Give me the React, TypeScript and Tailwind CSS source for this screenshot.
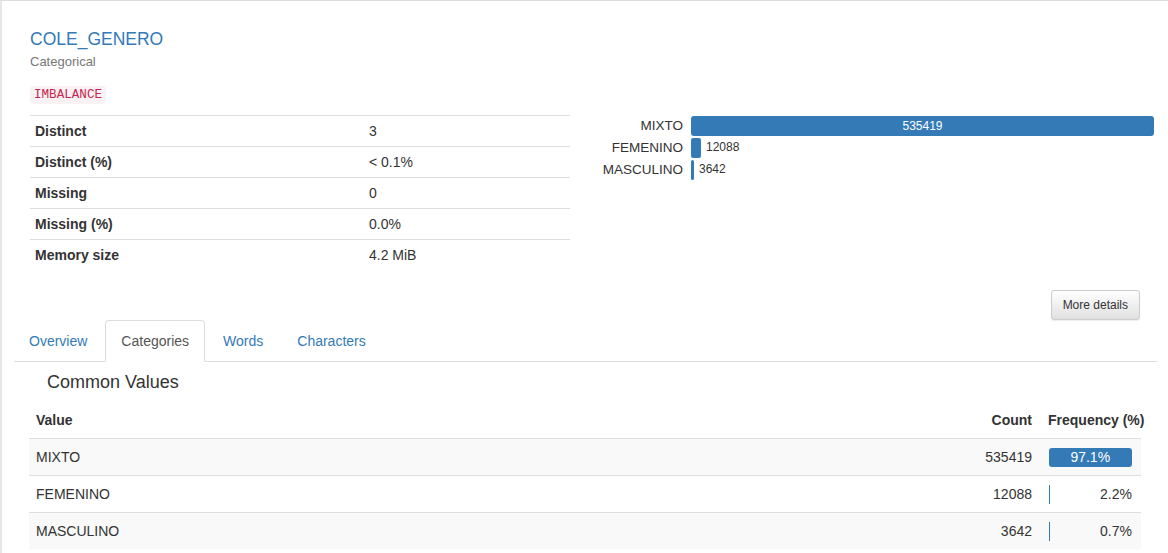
import React from "react";

const stats: [string, string][] = [
  ["Distinct", "3"],
  ["Distinct (%)", "< 0.1%"],
  ["Missing", "0"],
  ["Missing (%)", "0.0%"],
  ["Memory size", "4.2 MiB"],
];

const cats = [
  { name: "MIXTO", count: 535419, freq: 97.1 },
  { name: "FEMENINO", count: 12088, freq: 2.2 },
  { name: "MASCULINO", count: 3642, freq: 0.7 },
];

const MAX = 535419;

export default function App() {
  return (
    <div
      className="w-[1168px] h-[553px] overflow-hidden bg-white border-l-2 border-t border-l-[#e6e6ea] border-t-[#dcdcdc] text-[#333]"
      style={{ fontFamily: '"Liberation Sans", Arial, Helvetica, sans-serif' }}
    >
      {/* Top section */}
      <div className="flex pt-[28px] pl-[28px] pr-[12px]">
        <div className="w-[540px] shrink-0">
          <div className="text-[17.5px] leading-[20px] text-[#337ab7]">COLE_GENERO</div>
          <div className="mt-[4px] text-[13px] leading-[18px] text-[#777]">Categorical</div>
          <div className="mt-[15px] h-[18px] flex items-start">
            <span
              className="block h-[18px] px-[4px] rounded-[4px] bg-[#f9f2f4] text-[#c7254e] text-[12.6px] leading-[19px]"
              style={{ fontFamily: '"Liberation Mono", "DejaVu Sans Mono", monospace' }}
            >
              IMBALANCE
            </span>
          </div>
          <div className="mt-[11px] text-[14px]">
            {stats.map(([k, v]) => (
              <div key={k} className="flex border-t border-[#ddd] h-[31px] items-center pt-[1px]">
                <div className="w-[334px] px-[5px] font-bold">{k}</div>
                <div className="flex-1 px-[5px]">{v}</div>
              </div>
            ))}
          </div>
        </div>
        <div className="flex-1 pt-[86px]">
          {cats.map((c) => {
            const w = Math.max(2, Math.round((c.count / MAX) * 463));
            const full = c.count === MAX;
            return (
              <div key={c.name} className="flex items-center h-[22px]">
                <div className="w-[113px] text-right text-[13.5px] leading-[16px]">{c.name}</div>
                <div className="ml-[8px] flex items-center w-[463px]">
                  <div
                    className={
                      full
                        ? "h-[20px] rounded-[3px] bg-[#337ab7] text-white text-[12px] leading-[20px] text-center"
                        : "h-[20px] rounded-[2px] bg-[#337ab7]"
                    }
                    style={{ width: `${w}px` }}
                  >
                    {full ? c.count : null}
                  </div>
                  {!full && (
                    <span className="ml-[5px] text-[12px] leading-[14px] -mt-[3px]">{c.count}</span>
                  )}
                </div>
              </div>
            );
          })}
        </div>
      </div>

      {/* More details */}
      <div className="flex justify-end pr-[28px] mt-[20px]">
        <button className="h-[30px] px-[11px] text-[12px] leading-[18px] text-[#333] border border-[#ccc] rounded-[3px] bg-linear-to-b from-white to-[#e0e0e0] shadow-[0_1px_1px_rgba(0,0,0,0.075)]">
          More details
        </button>
      </div>

      {/* Tabs */}
      <div className="ml-[12px] mr-[11px] flex border-b border-[#ddd] h-[42px] text-[14px] leading-[20px]">
        {["Overview", "Categories", "Words", "Characters"].map((t, i) => {
          const active = t === "Categories";
          const base = i === 0 ? "-ml-px mr-[2px] h-[42px] px-[15px] py-[10px] border " : "mr-[2px] h-[42px] px-[15px] py-[10px] border ";
          return (
            <div
              key={t}
              className={
                active
                  ? base + "border-[#ddd] border-b-white rounded-t-[4px] bg-white text-[#555]"
                  : base + "border-transparent text-[#337ab7]"
              }
            >
              {t}
            </div>
          );
        })}
      </div>

      {/* Common values */}
      <div className="ml-[45px] mt-[10px] text-[18px] leading-[20px] font-medium">Common Values</div>
      <div className="ml-[27px] mr-[27px] mt-[10px] text-[14px] leading-[20px]">
        <div className="flex h-[36px] items-center font-bold">
          <div className="flex-1 pl-[7px]">Value</div>
          <div className="w-[100px] pr-[8px] text-right">Count</div>
          <div className="w-[101px] pl-[8px] whitespace-nowrap">Frequency (%)</div>
        </div>
        {cats.map((c, i) => (
          <div
            key={c.name}
            className={
              i % 2 === 0
                ? "flex h-[37px] items-center border-t border-[#ddd] bg-[#f9f9f9]"
                : "flex h-[37px] items-center border-t border-[#ddd] bg-white"
            }
          >
            <div className="flex-1 pl-[7px]">{c.name}</div>
            <div className="w-[100px] pr-[8px] text-right">{c.count}</div>
            <div className="w-[101px] px-[8px]">
              {c.freq > 50 ? (
                <div
                  className="h-[19px] rounded-[3px] bg-[#337ab7] text-white text-center leading-[19px] ml-[1px]"
                  style={{ width: `${c.freq}%` }}
                >
                  {c.freq.toFixed(1)}%
                </div>
              ) : (
                <div className="flex items-center ml-[1px]">
                  <div className="h-[19px] w-px bg-[#337ab7]" />
                  <div className="flex-1 text-right pr-[1px]">{c.freq.toFixed(1)}%</div>
                </div>
              )}
            </div>
          </div>
        ))}
      </div>
    </div>
  );
}
